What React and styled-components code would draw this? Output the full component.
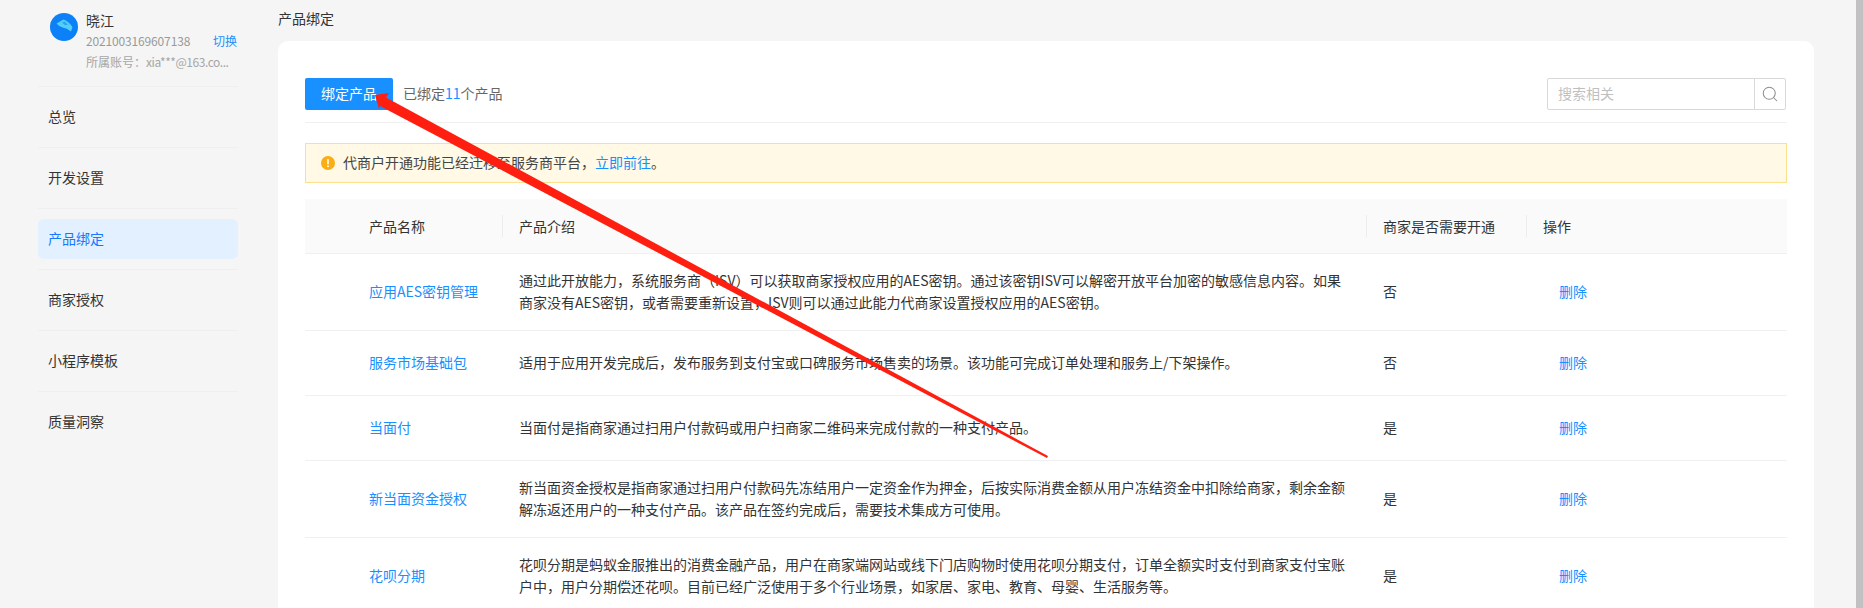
import React from "react";
import styled, { createGlobalStyle } from "styled-components";
import { Search } from "lucide-react";

const Global = createGlobalStyle`
  html, body { margin: 0; padding: 0; height: 608px; overflow: hidden; background: #f5f5f5; }
  body { font-family: "Noto Sans CJK SC", "Liberation Sans", sans-serif; font-size: 14px; color: #333; }
  * { box-sizing: border-box; }
`;

const Shell = styled.div`
  position: relative;
  display: flex;
  width: 1863px;
  height: 608px;
  overflow: hidden;
  background: #f5f5f5;
`;
const Sidebar = styled.aside`
  flex: none;
  width: 278px;
  padding-left: 38px;
`;
const Profile = styled.div`
  display: flex;
  width: 200px;
  height: 86px;
  padding: 10px 1px 0 12px;
  gap: 8px;
`;
const Avatar = styled.svg`
  flex: none;
  width: 28px;
  height: 28px;
  margin-top: 3px;
`;
const ProfileText = styled.div`
  flex: 1;
  min-width: 0;
`;
const Name = styled.div`
  height: 22px;
  line-height: 20px;
  font-size: 14px;
  color: #333;
`;
const IdRow = styled.div`
  display: flex;
  justify-content: space-between;
  height: 20px;
  line-height: 18px;
  font-size: 12px;
  color: #999;
`;
const IdNumber = styled.span`
  letter-spacing: -0.15px;
`;
const SwitchLink = styled.a`
  color: #1890ff;
`;
const Account = styled.div`
  height: 20px;
  line-height: 20px;
  font-size: 12px;
  color: #a6a6a6;
  white-space: nowrap;
`;
const AccountMail = styled.span`
  letter-spacing: -0.45px;
`;
const NavRow = styled.div`
  width: 200px;
  padding: 10px 0;
  border-top: 1px solid #efefef;
`;
const NavItem = styled.a`
  display: block;
  height: 40px;
  line-height: 38px;
  padding-left: 10px;
  border-radius: 6px;
  font-size: 14px;
  color: ${(p) => (p.$active ? "#1677ff" : "#333")};
  background: ${(p) => (p.$active ? "#e2f0ff" : "transparent")};
`;
const Main = styled.main`
  flex: 1;
  min-width: 0;
  padding-right: 42px;
`;
const PageTitle = styled.div`
  height: 41px;
  padding-top: 8px;
  line-height: 20px;
  font-size: 14px;
  color: #333;
`;
const Card = styled.section`
  height: 600px;
  padding: 37px 27px 0;
  background: #fff;
  border-radius: 10px;
`;
const Toolbar = styled.div`
  display: flex;
  align-items: flex-start;
  height: 45px;
  border-bottom: 1px solid #f0f0f0;
`;
const PrimaryButton = styled.button`
  width: 88px;
  height: 32px;
  padding: 0 0 2px;
  border: 0;
  border-radius: 2px;
  background: #1890ff;
  color: #fff;
  font: inherit;
`;
const Count = styled.div`
  margin-left: 10px;
  line-height: 30px;
  color: #666;
`;
const CountNum = styled.span`
  color: #1890ff;
`;
const SearchBox = styled.div`
  display: flex;
  width: 239px;
  height: 32px;
  margin-left: auto;
  margin-right: 1px;
  border: 1px solid #d9d9d9;
  border-radius: 2px;
`;
const SearchField = styled.div`
  flex: 1;
  padding-left: 10px;
  line-height: 28px;
  color: #bfbfbf;
`;
const SearchButton = styled.div`
  display: flex;
  align-items: center;
  justify-content: center;
  width: 31px;
  border-left: 1px solid #d9d9d9;
  color: #8c8c8c;
`;
const Alert = styled.div`
  display: flex;
  align-items: center;
  gap: 8px;
  height: 40px;
  margin-top: 20px;
  padding-left: 15px;
  background: #fff9e5;
  border: 1px solid #fbe08f;
`;
const AlertIcon = styled.svg`
  flex: none;
  width: 14px;
  height: 14px;
`;
const AlertText = styled.div`
  margin-top: -2px;
  color: #444;
`;
const TextLink = styled.a`
  color: #1890ff;
`;
const Table = styled.table`
  width: 1482px;
  margin-top: 16px;
  border-collapse: collapse;
  table-layout: fixed;
`;
const HeadRow = styled.tr`
  height: 54px;
  background: #fafafa;
  border-bottom: 1px solid #f0f0f0;
`;
const HeadCell = styled.th`
  position: relative;
  padding: 0 0 0 ${(p) => p.$pad || 17}px;
  font-weight: 400;
  text-align: left;
  font-size: 14px;
  color: #333;
  &::before {
    content: "";
    display: ${(p) => (p.$first ? "none" : "block")};
    position: absolute;
    left: 0;
    top: 16px;
    width: 1px;
    height: 22px;
    background: #ececec;
  }
`;
const Row = styled.tr`
  height: ${(p) => (p.$tall ? 77 : 65)}px;
  border-bottom: 1px solid #f0f0f0;
`;
const Cell = styled.td`
  padding: 0 15px 2px 17px;
  line-height: 22px;
  font-size: 14px;
  color: #333;
`;
const NameCell = styled(Cell)`
  padding-left: 64px;
  color: #1890ff;
`;
const ActionCell = styled(Cell)`
  padding-left: 33px;
  color: #1890ff;
`;
const Scrollbar = styled.div`
  flex: none;
  width: 7px;
  height: 100%;
  background: #c1c1c1;
`;
const ArrowOverlay = styled.svg`
  position: absolute;
  left: 0;
  top: 0;
  width: 1863px;
  height: 608px;
  pointer-events: none;
`;

const navItems = ["总览", "开发设置", "产品绑定", "商家授权", "小程序模板", "质量洞察"];

const rows = [
  { name: "应用AES密钥管理", tall: true, need: "否", intro: "通过此开放能力，系统服务商（ISV）可以获取商家授权应用的AES密钥。通过该密钥ISV可以解密开放平台加密的敏感信息内容。如果商家没有AES密钥，或者需要重新设置，ISV则可以通过此能力代商家设置授权应用的AES密钥。" },
  { name: "服务市场基础包", need: "否", intro: "适用于应用开发完成后，发布服务到支付宝或口碑服务市场售卖的场景。该功能可完成订单处理和服务上/下架操作。" },
  { name: "当面付", need: "是", intro: "当面付是指商家通过扫用户付款码或用户扫商家二维码来完成付款的一种支付产品。" },
  { name: "新当面资金授权", tall: true, need: "是", intro: "新当面资金授权是指商家通过扫用户付款码先冻结用户一定资金作为押金，后按实际消费金额从用户冻结资金中扣除给商家，剩余金额解冻返还用户的一种支付产品。该产品在签约完成后，需要技术集成方可使用。" },
  { name: "花呗分期", tall: true, need: "是", intro: "花呗分期是蚂蚁金服推出的消费金融产品，用户在商家端网站或线下门店购物时使用花呗分期支付，订单全额实时支付到商家支付宝账户中，用户分期偿还花呗。目前已经广泛使用于多个行业场景，如家居、家电、教育、母婴、生活服务等。" },
];

export default function App() {
  return (
    <Shell>
      <Global />
      <Sidebar>
        <Profile>
          <Avatar viewBox="0 0 28 28">
            <circle cx="14" cy="14" r="14" fill="#0b80f7" />
            <path d="M6.5 10.5 L13.5 6.5 Q18.5 8 22.5 14 L21 18.5 Q17 15 12.5 14.5 Q9 13.5 6.5 10.5 Z" fill="#55cdf4" />
            <path d="M12 9.5 L15 8.5 L18 12 L14.5 12 Z" fill="#2ba8f3" />
          </Avatar>
          <ProfileText>
            <Name>晓江</Name>
            <IdRow>
              <IdNumber>2021003169607138</IdNumber>
              <SwitchLink>切换</SwitchLink>
            </IdRow>
            <Account>所属账号：<AccountMail>xia***@163.co...</AccountMail></Account>
          </ProfileText>
        </Profile>
        {navItems.map((item) => (
          <NavRow key={item}>
            <NavItem $active={item === "产品绑定"}>{item}</NavItem>
          </NavRow>
        ))}
      </Sidebar>
      <Main>
        <PageTitle>产品绑定</PageTitle>
        <Card>
          <Toolbar>
            <PrimaryButton>绑定产品</PrimaryButton>
            <Count>
              已绑定<CountNum>11</CountNum>个产品
            </Count>
            <SearchBox>
              <SearchField>搜索相关</SearchField>
              <SearchButton>
                <Search size={18} strokeWidth={1.35} />
              </SearchButton>
            </SearchBox>
          </Toolbar>
          <Alert>
            <AlertIcon viewBox="0 0 14 14">
              <circle cx="7" cy="7" r="7" fill="#faad14" />
              <rect x="6.2" y="3" width="1.6" height="5.4" rx="0.7" fill="#fff" />
              <circle cx="7" cy="10.3" r="0.95" fill="#fff" />
            </AlertIcon>
            <AlertText>
              代商户开通功能已经迁移至服务商平台，<TextLink>立即前往</TextLink>。
            </AlertText>
          </Alert>
          <Table>
            <colgroup>
              <col width="197" />
              <col width="864" />
              <col width="160" />
              <col width="261" />
            </colgroup>
            <thead>
              <HeadRow>
                <HeadCell $first $pad={64}>产品名称</HeadCell>
                <HeadCell>产品介绍</HeadCell>
                <HeadCell>商家是否需要开通</HeadCell>
                <HeadCell>操作</HeadCell>
              </HeadRow>
            </thead>
            <tbody>
              {rows.map((r) => (
                <Row key={r.name} $tall={r.tall}>
                  <NameCell>{r.name}</NameCell>
                  <Cell>{r.intro}</Cell>
                  <Cell>{r.need}</Cell>
                  <ActionCell>删除</ActionCell>
                </Row>
              ))}
            </tbody>
          </Table>
        </Card>
      </Main>
      <Scrollbar />
      <ArrowOverlay viewBox="0 0 1863 608">
        <polygon points="375,95 389,93 386,97.5 1048,456 1047,458 380,106 379,109" fill="#ff1f10" />
      </ArrowOverlay>
    </Shell>
  );
}
